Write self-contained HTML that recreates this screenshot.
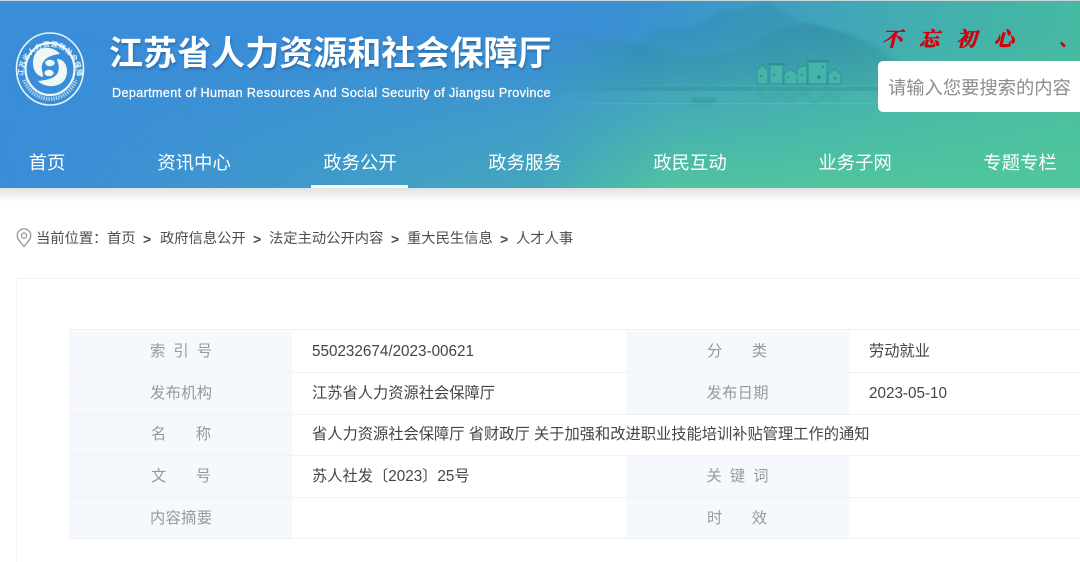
<!DOCTYPE html>
<html lang="zh"><head><meta charset="utf-8"><style>
html,body{margin:0;padding:0;background:#fff}
#p{position:relative;width:1080px;height:562px;overflow:hidden;background:#fff;font-family:"Liberation Sans","Noto Sans CJK SC",sans-serif}
#p div{position:absolute;white-space:nowrap}
.nav{top:150px;font-size:18.4px;line-height:26px;color:#fff;width:120px;text-align:center}
.l{font-size:15.25px;line-height:20px;color:#999;width:62px;left:150px;text-align:justify;text-align-last:justify;white-space:normal!important}
.l2{left:706.5px}
.v{font-size:15.25px;line-height:20px;color:#444;left:312px}
.v2{left:869px}
.bc{top:229px;font-size:14.3px;line-height:20px;color:#4d4d4d}
.gt{font-weight:700;font-size:14px}
.bg{background:#f5f8fc}
.ln{height:1px;background:#f1f2f4;left:69px;width:1011px}
</style></head><body><div id="p">
<div style="left:0;top:0;width:1080px;height:1px;background:#cfd6dc"></div>
<div style="left:0;top:1px;width:1080px;height:187px;background:linear-gradient(90deg,#3a8dd9 0%,#3a8dd9 50%,#3a92d0 60%,#42aeb0 85%,#46b9a2 100%)"></div>
<div style="left:0;top:1px;width:1080px;height:187px;background:linear-gradient(180deg,rgba(82,200,155,0) 15%,rgba(82,200,155,.9) 100%);-webkit-mask-image:linear-gradient(90deg,rgba(0,0,0,0) 0%,rgba(0,0,0,.25) 28%,rgba(0,0,0,.5) 50%,#000 62%);mask-image:linear-gradient(90deg,rgba(0,0,0,0) 0%,rgba(0,0,0,.25) 28%,rgba(0,0,0,.5) 50%,#000 62%)"></div>
<svg style="position:absolute;left:540px;top:0;-webkit-mask-image:linear-gradient(90deg,transparent 0,#000 100px);mask-image:linear-gradient(90deg,transparent 0,#000 100px)" width="540" height="188" viewBox="-100 0 540 188">
<defs><linearGradient id="m" x1="0" y1="0" x2="0" y2="1"><stop offset="0" stop-color="#2c7f9c" stop-opacity=".3"/><stop offset="1" stop-color="#2c8a94" stop-opacity=".1"/></linearGradient></defs>
<g style="filter:blur(1.5px)">
<path d="M-100 60 L-50 50 L0 43 L10 35 L30 27 L50 30 L77 12 L103 10 L127 2 L157 20 L190 30 L230 40 L260 60 L260 86 L-100 86Z" fill="url(#m)"/>
<path d="M-100 30 L-50 36 L0 42 L47 58 L100 50 L143 28 L170 23 L207 33 L237 50 L250 60 L250 86 L-100 86Z" fill="url(#m)"/>
<path d="M50 97 L58 100 L72 99 L78 101 L72 103 L54 103Z" fill="#2f8c8a" opacity=".6"/>
<path d="M116 92 L128 100 L140 93 L150 100 L165 92 L175 102 L188 93 L198 100" fill="none" stroke="#35988f" stroke-width="3" opacity=".35"/>
</g>
<g style="filter:blur(.5px)" fill="#45b5a9" stroke="#2f8f98" stroke-width="1">
<path d="M117 70 L122 65 L128 70 V84 H117Z"/>
<path d="M130 65 H143 V84 H130Z"/>
<path d="M144 74 L150 69 L157 74 V84 H144Z"/>
<path d="M157 68 L167 65 V84 H157Z"/>
<path d="M168 62 H187 V84 H168Z"/>
<path d="M188 74 L195 69 L201 74 V84 H188Z"/>
</g>
<path d="M128 64 H145 M167 61 H190" stroke="#2f8f98" stroke-width="2" fill="none"/>
<g fill="#2f8f94"><circle cx="121" cy="76" r="1.2"/><circle cx="134" cy="75" r="1.2"/><circle cx="179" cy="77" r="2"/><circle cx="183" cy="67" r="1.2"/><circle cx="195" cy="78" r="1.4"/><circle cx="162" cy="75" r="1.2"/><circle cx="148" cy="77" r="1"/></g>
<path d="M-100 87 H290 V91 H-100Z" fill="#33918f" opacity=".45"/>
<rect x="-100" y="103" width="390" height="1" fill="#6fd0ae" opacity=".3"/>
</svg>
<svg style="position:absolute;left:15px;top:32px" width="70" height="74" viewBox="0 0 70 74">
<defs><path id="t" d="M8 44 A27 29.5 0 1 1 62 44"/></defs>
<ellipse cx="35" cy="37" rx="33.5" ry="36" fill="none" stroke="#e3f3f7" stroke-width="1.6"/>
<path d="M9 48 A28 30 0 0 0 61 48" fill="none" stroke="#cfe8f3" stroke-width="4" stroke-dasharray="1.5 1" opacity=".7"/>
<text font-size="7" font-weight="700" fill="#e6f5f8" font-family="'Noto Sans CJK SC',sans-serif" letter-spacing=".45"><textPath href="#t">江苏省人力资源和社会保障厅</textPath></text>
<ellipse cx="35" cy="37" rx="24.5" ry="26" fill="none" stroke="#eef8f8" stroke-width="2.2"/>
<path d="M45 22 C38 13 18 12 18 31 C18 39 22 44 28 45 C28 40 26 37 27 33 C29 26 36 23 45 22Z" fill="#eef9f7"/>
<path d="M23 49 C30 57 52 57 52 39 C52 32 48 27 42 27 C43 32 45 35 43 40 C41 46 33 48 23 49Z" fill="#eef9f7"/>
<ellipse cx="35" cy="31" rx="4.8" ry="3.2" fill="#eef9f7"/>
<ellipse cx="34" cy="41" rx="4.6" ry="3.2" fill="#eef9f7"/>
</svg>
<div style="left:109px;top:34px;font-size:34px;line-height:40px;font-weight:700;color:#fff;letter-spacing:.05px;text-shadow:1px 2px 2px rgba(30,70,120,.45)">江苏省人力资源和社会保障厅</div>
<div style="left:112px;top:84px;font-size:12.6px;line-height:18px;color:#fff;letter-spacing:.375px;-webkit-text-stroke:.25px #fff">Department of Human Resources And Social Security of Jiangsu Province</div>
<div style="left:882px;top:28px;font-size:20px;line-height:24px;font-weight:700;font-family:'Liberation Serif','Noto Serif CJK SC',serif;font-style:italic;color:#d5000d;-webkit-text-stroke:.7px #d5000d;letter-spacing:17.3px">不忘初心</div>
<div style="left:1059px;top:29px;font-size:19px;line-height:24px;font-weight:700;color:#d5000d">、</div>
<div style="left:878px;top:61px;width:210px;height:51px;background:#fff;border-radius:5px"></div>
<div style="left:888px;top:75px;font-size:18.3px;line-height:26px;color:#8c8c8c">请输入您要搜索的内容</div>
<div class="nav" style="left:-13px">首页</div>
<div class="nav" style="left:134px">资讯中心</div>
<div class="nav" style="left:300px">政务公开</div>
<div class="nav" style="left:465px">政务服务</div>
<div class="nav" style="left:630px">政民互动</div>
<div class="nav" style="left:795px">业务子网</div>
<div class="nav" style="left:960px">专题专栏</div>
<div style="left:311px;top:185px;width:97px;height:3px;background:#f2f6f6"></div>
<div style="left:0;top:188px;width:1080px;height:14px;background:linear-gradient(#e2e2e2,#fff)"></div>
<svg style="position:absolute;left:16px;top:228px" width="16" height="20" viewBox="0 0 16 20"><path d="M8 18.5 C5 14.5 1.2 11.5 1.2 7.6 A6.8 6.8 0 0 1 14.8 7.6 C14.8 11.5 11 14.5 8 18.5Z" fill="none" stroke="#919191" stroke-width="1.2"/><circle cx="8" cy="7.6" r="2.6" fill="none" stroke="#919191" stroke-width="1.2"/></svg>
<div class="bc" style="left:36px">当前位置：</div>
<div class="bc" style="left:107px">首页</div><div class="bc gt" style="left:143px">&gt;</div>
<div class="bc" style="left:160px">政府信息公开</div><div class="bc gt" style="left:253px">&gt;</div>
<div class="bc" style="left:269px">法定主动公开内容</div><div class="bc gt" style="left:391px">&gt;</div>
<div class="bc" style="left:407px">重大民生信息</div><div class="bc gt" style="left:500px">&gt;</div>
<div class="bc" style="left:516px">人才人事</div>
<div style="left:16px;top:278px;width:1070px;height:300px;border:1px solid #f3f3f3;box-sizing:border-box"></div>
<div class="bg" style="left:69px;top:331px;width:223px;height:208px"></div>
<div class="bg" style="left:626px;top:331px;width:223px;height:83px"></div>
<div class="bg" style="left:626px;top:456px;width:223px;height:83px"></div>
<div class="ln" style="top:329px;background:#eee"></div>
<div class="ln" style="top:372px"></div>
<div class="ln" style="top:414px"></div>
<div class="ln" style="top:455px"></div>
<div class="ln" style="top:497px"></div>
<div class="ln" style="top:538px"></div>
<div class="l" style="top:342px">索 引 号</div>
<div class="l" style="top:384px">发布机构</div>
<div class="l" style="top:425px;left:151px;width:60px">名 称</div>
<div class="l" style="top:467px;left:151px;width:60px">文 号</div>
<div class="l" style="top:509px">内容摘要</div>
<div class="l l2" style="top:342px;left:707px;width:60px">分 类</div>
<div class="l l2" style="top:384px">发布日期</div>
<div class="l l2" style="top:467px">关 键 词</div>
<div class="l l2" style="top:509px;left:707px;width:60px">时 效</div>
<div class="v" style="top:342px">550232674/2023-00621</div>
<div class="v" style="top:384px">江苏省人力资源社会保障厅</div>
<div class="v" style="top:425px">省人力资源社会保障厅 省财政厅 关于加强和改进职业技能培训补贴管理工作的通知</div>
<div class="v" style="top:467px">苏人社发〔2023〕25号</div>
<div class="v v2" style="top:342px">劳动就业</div>
<div class="v v2" style="top:384px">2023-05-10</div>
</div></body></html>
